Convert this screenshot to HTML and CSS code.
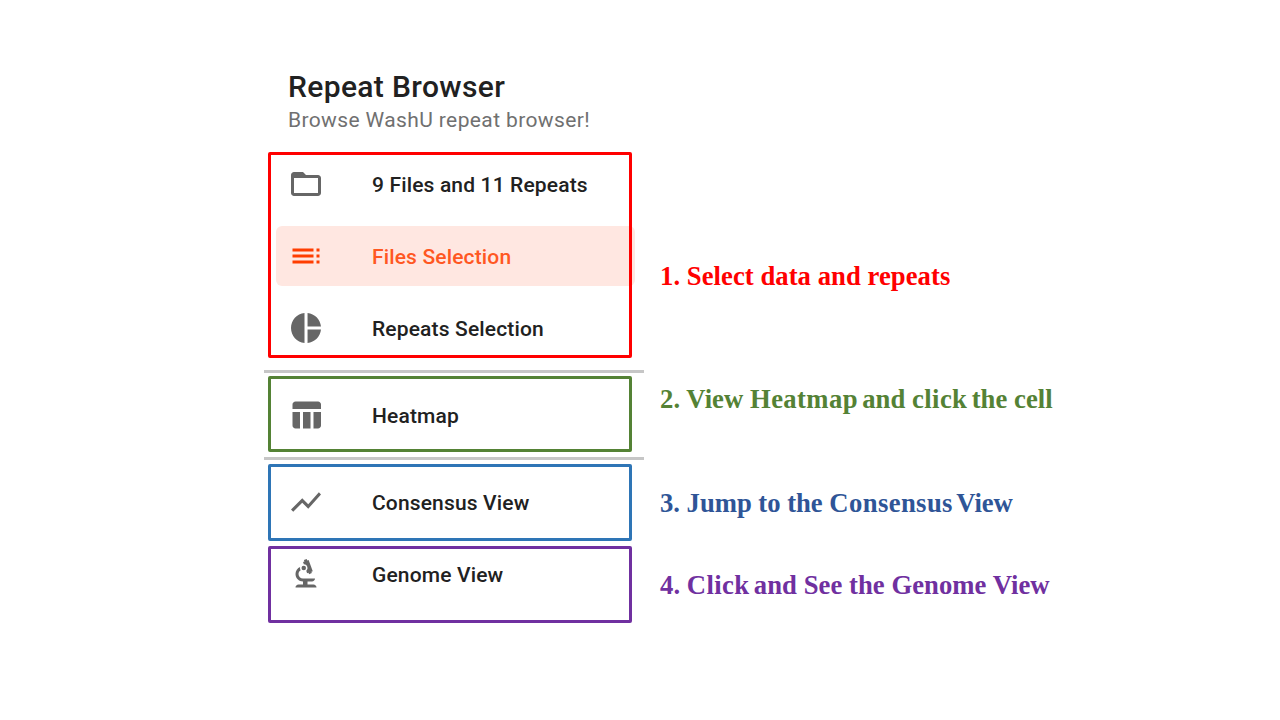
FILE: index.html
```html
<!DOCTYPE html>
<html lang="en">
<head>
<meta charset="utf-8">
<title>Repeat Browser</title>
<link rel="stylesheet" href="styles.css">
</head>
<body>
<main class="page">
  <nav class="drawer">
    <header class="drawer-header">
      <h1 class="title">Repeat Browser</h1>
      <p class="subtitle">Browse WashU repeat browser!</p>
    </header>
    <section class="frame frame-data">
      <div class="item item-files">
        <svg class="icon" viewBox="0 0 24 24"><path d="M9.17 6l2 2H20v10H4V6h5.17M10 4H4c-1.1 0-1.99.9-1.99 2L2 18c0 1.1.9 2 2 2h16c1.1 0 2-.9 2-2V8c0-1.1-.9-2-2-2h-8l-2-2z"/><path d="M4 5v3h8V6.500l-2-1.500z"/></svg>
        <span class="label">9 Files and 11 Repeats</span>
      </div>
      <div class="item item-active">
        <svg class="icon" viewBox="0 0 24 24"><path d="M3 9h14V7H3v2zm0 4h14v-2H3v2zm0 4h14v-2H3v2zm16 0h2v-2h-2v2zm0-10v2h2V7h-2zm0 6h2v-2h-2v2z"/></svg>
        <span class="label">Files Selection</span>
      </div>
      <div class="item item-repeats">
        <svg class="icon" viewBox="0 0 24 24"><path d="M11 2v20c-5.07-.5-9-4.79-9-10s3.93-9.5 9-10zm2.03 0v8.99H22c-.47-4.74-4.24-8.52-8.97-8.99zm0 11.01V22c4.74-.47 8.5-4.25 8.97-8.99h-8.97z"/></svg>
        <span class="label">Repeats Selection</span>
      </div>
    </section>
    <hr class="divider">
    <section class="frame frame-heatmap">
      <div class="item">
        <svg class="icon" viewBox="0 0 24 24"><path d="M10 10.02h5V21h-5zM17 21h3c1.1 0 2-.9 2-2v-9h-5v11zm3-18H5c-1.1 0-2 .9-2 2v3h19V5c0-1.1-.9-2-2-2zM3 19c0 1.1.9 2 2 2h3V10H3v9z"/></svg>
        <span class="label">Heatmap</span>
      </div>
    </section>
    <hr class="divider">
    <section class="frame frame-consensus">
      <div class="item">
        <svg class="icon" viewBox="0 0 24 24"><path d="M3.5 18.49l6-6.01 4 4L22 6.92l-1.41-1.41-7.09 7.97-4-4L2 16.99z"/></svg>
        <span class="label">Consensus View</span>
      </div>
    </section>
    <section class="frame frame-genome">
      <div class="item">
        <svg class="icon" viewBox="0 0 24 24"><path d="M7 19c-1.1 0-2 .9-2 2h14c0-1.1-.9-2-2-2h-4v-2h3c1.1 0 2-.9 2-2h-8c-1.66 0-3-1.34-3-3 0-1.09.59-2.04 1.46-2.56C8.17 9.03 8 8.54 8 8c0-.21.04-.42.09-.62C6.28 8.13 5 9.92 5 12c0 2.76 2.24 5 5 5v2H7z"/><path d="M10.56 5.51C11.91 5.54 13 6.64 13 8c0 .75-.33 1.41-.85 1.87l.59 1.62.94-.34.34.94 1.88-.68-.34-.94.94-.34-2.74-7.52-.94.34-.34-.94-1.88.68.34.94-.94.35.56 1.53z"/><circle cx="10.5" cy="8" r="1.5"/></svg>
        <span class="label">Genome View</span>
      </div>
    </section>
  </nav>
  <aside class="steps">
    <p class="step step-data">1. Select data and repeats</p>
    <p class="step step-heatmap">2. View <span class="wide">Heatmap</span><span class="tight"> </span>and <span class="wide">click</span><span class="tight"> </span>the cell</p>
    <p class="step step-consensus">3. Jump to the <span class="wide">Consensus</span><span class="tight"> </span>View</p>
    <p class="step step-genome">4. <span class="wide">Click</span><span class="tight"> </span>and See the Genome View</p>
  </aside>
</main>
</body>
</html>
```
FILE: styles.css
```css
* { box-sizing: border-box; }
body { margin: 0; background: #fff; }
.page {
  display: grid;
  grid-template-columns: 380px 1fr;
  column-gap: 16px;
  width: 1280px;
  height: 720px;
  padding-left: 264px;
  overflow: hidden;
}
.drawer { font-family: Roboto, sans-serif; color: #212121; }
.drawer-header { height: 152px; padding: 66px 0 0 24px; }
.title {
  margin: 0;
  font-size: 30px;
  line-height: 42px;
  font-weight: 500;
  letter-spacing: 0.36px;
  white-space: nowrap;
}
.subtitle {
  margin: 0;
  font-size: 21px;
  line-height: 24px;
  font-weight: 400;
  letter-spacing: 0.38px;
  color: #707070;
  white-space: nowrap;
}
.frame {
  position: relative;
  width: 364px;
  margin-left: 4px;
  padding-left: 8px;
}
/* the outline lies over the highlighted row */
.frame::after {
  content: "";
  position: absolute;
  inset: 0;
  border: 3px solid currentColor;
  border-radius: 2px;
}
.frame-data {
  display: flex;
  flex-direction: column;
  gap: 12px;
  height: 206px;
  padding-top: 2px;
  color: #ff0000;
}
.frame-heatmap { height: 76px; margin-top: 3px; padding-top: 9px; color: #548235; }
.frame-consensus { height: 77px; margin-top: 4px; padding-top: 8px; color: #2e75b6; }
.frame-genome { height: 77px; margin-top: 5px; color: #7030a0; }
.item {
  display: flex;
  align-items: center;
  gap: 48px;
  flex: none;
  width: 359px;
  height: 60px;
  padding-left: 12px;
  border-radius: 6px;
  color: #212121;
  font-size: 21px;
  line-height: 30px;
  font-weight: 500;
  letter-spacing: 0.15px;
  white-space: nowrap;
}
.label { padding-top: 2px; }
.frame-genome .item { height: 56px; }
.item-active { background: #ffe7e1; color: #ff5722; }
.icon { flex: none; width: 36px; height: 36px; fill: #666; }
.item-active .icon { fill: #ff3d00; }
.divider { height: 3px; margin: 12px 0 0; border: 0; background: #c6c6c6; }
.frame-heatmap + .divider { margin-top: 5px; }
.steps {
  padding-top: 260px;
  font-family: "Liberation Serif", serif;
  font-size: 26.67px;
  font-weight: 700;
  line-height: 32px;
  letter-spacing: 0.05px;
  white-space: nowrap;
}
.step { margin: 0; }
.wide { letter-spacing: 0.4px; }
.tight { letter-spacing: -2.4px; }
.step-data { color: #ff0000; }
.step-heatmap { margin-top: 91px; color: #548235; }
.step-consensus { margin-top: 72px; color: #2f5597; letter-spacing: -0.02px; }
.step-consensus .tight { letter-spacing: -3.4px; }
.step-genome { margin-top: 50px; color: #7030a0; }
```
